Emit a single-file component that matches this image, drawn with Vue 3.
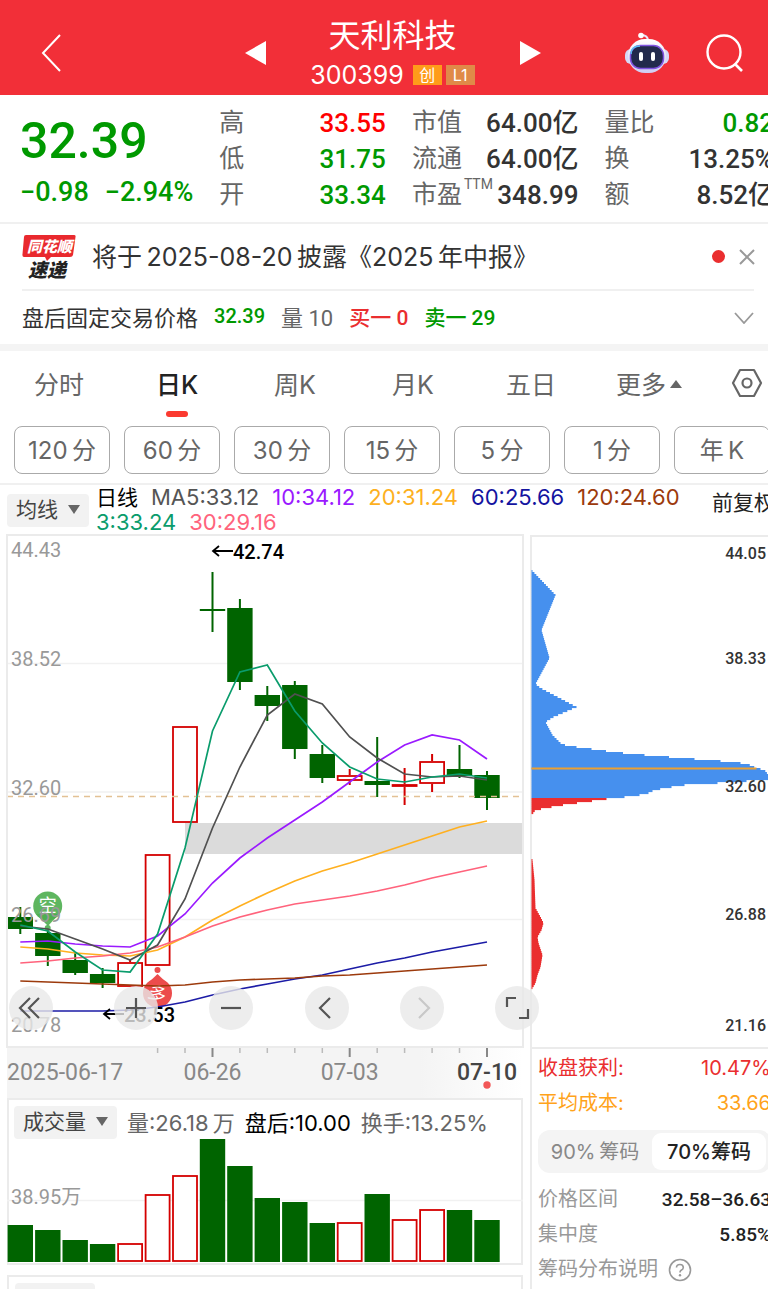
<template>
    <div class="stock-page">
        <header class="top-bar">
            <button class="icon-btn back" aria-label="返回">
                <svg width="20" height="38" viewBox="0 0 20 38"><path d="M19 1 L2 19 L19 37" fill="none" stroke="#fff" stroke-width="2" /></svg>
            </button>
            <div class="switcher">
                <button class="icon-btn" aria-label="上一只">
                    <svg width="21" height="24" viewBox="0 0 21 24"><path d="M0 12 L21 0 V24 Z" fill="#fff" /></svg>
                </button>
                <div class="stock-title">
                    <h1>天利科技</h1>
                    <div class="code-row">
                        <span class="code">300399</span>
                        <span class="tag">创</span>
                        <span class="tag level">L1</span>
                    </div>
                </div>
                <button class="icon-btn" aria-label="下一只">
                    <svg width="21" height="24" viewBox="0 0 21 24"><path d="M21 12 L0 0 V24 Z" fill="#fff" /></svg>
                </button>
            </div>
            <div class="top-actions">
                <button class="icon-btn" aria-label="智能助手">
                    <svg width="46" height="42" viewBox="0 0 46 42">
                        <defs>
                            <linearGradient id="shell" x1="0" y1="0" x2="0" y2="1">
                                <stop offset="0" stop-color="#fff" />
                                <stop offset="1" stop-color="#cfcdf2" />
                            </linearGradient>
                        </defs>
                        <path d="M17 3 Q24 3 24 9" fill="none" stroke="#e9e6fa" stroke-width="2" />
                        <circle cx="17" cy="3.5" r="2.8" fill="#fff" />
                        <rect x="1" y="17" width="44" height="15" rx="6" fill="#d5d8f6" />
                        <rect x="4" y="7" width="38" height="34" rx="17" fill="url(#shell)" />
                        <rect x="6.5" y="13.5" width="33" height="23" rx="10" fill="#222a4c" stroke="#8053e0" stroke-width="1.5" />
                        <path d="M7 22 Q7 14 16 14" fill="none" stroke="#59bff0" stroke-width="1.5" />
                        <rect x="15" y="20" width="4" height="9" rx="2" fill="#fff" />
                        <rect x="27" y="20" width="4" height="9" rx="2" fill="#fff" />
                    </svg>
                </button>
                <button class="icon-btn" aria-label="搜索">
                    <svg width="38" height="38" viewBox="0 0 38 38">
                        <circle cx="18" cy="18" r="16.5" fill="none" stroke="#fff" stroke-width="2.4" />
                        <path d="M29 30 L36 37" stroke="#fff" stroke-width="2.6" />
                    </svg>
                </button>
            </div>
        </header>

        <section class="quote">
            <div class="quote-price">
                <div class="price">32.39</div>
                <div class="change"><span>−0.98</span><span>−2.94%</span></div>
            </div>
            <dl v-for="(group, g) in quoteGroups" :key="g" class="quote-group">
                <div v-for="item in group" :key="item.label">
                    <dt>{{ item.label }}<sup v-if="item.sup">{{ item.sup }}</sup></dt>
                    <dd :class="item.tone">{{ item.value }}</dd>
                </div>
            </dl>
        </section>

        <section class="notices">
            <div class="news">
                <svg class="news-logo" width="54" height="48" viewBox="0 0 54 48">
                    <path d="M4 2 H52 Q54 2 53.5 4 L51 22 Q50.5 24 48 24 H29 L25 28 L23 24 H2 Q0 24 0.5 21 L2 4 Q2 2 4 2 Z" fill="#e9292e" />
                    <text x="5" y="19" font-size="15" fill="#fff">同花顺</text>
                    <text x="6" y="44" font-size="19" fill="#222">速递</text>
                </svg>
                <a class="news-text" href="#">将于&thinsp;2025-08-20&thinsp;披露《2025&thinsp;年中报》</a>
                <span class="dot"></span>
                <button class="icon-btn" aria-label="关闭">
                    <svg width="16" height="16" viewBox="0 0 16 16"><path d="M1 1 L15 15 M15 1 L1 15" stroke="#999" stroke-width="2" /></svg>
                </button>
            </div>
            <div class="after-hours">
                <span>盘后固定交易价格</span>
                <b class="green num">32.39</b>
                <span class="grey">量 10</span>
                <b class="red">买一 0</b>
                <b class="green">卖一 29</b>
                <button class="icon-btn" aria-label="展开">
                    <svg width="20" height="12" viewBox="0 0 20 12"><path d="M1 1 L10 11 L19 1" fill="none" stroke="#999" stroke-width="1.8" /></svg>
                </button>
            </div>
        </section>

        <nav class="periods">
            <button v-for="p in periods" :key="p" class="period" :class="{ active: p === period }" @click="period = p">
                {{ p }}<i v-if="p === '更多'" class="tri-up"></i>
            </button>
            <button class="icon-btn settings" aria-label="设置">
                <svg width="32" height="30" viewBox="0 0 32 30">
                    <path d="M9 2 H23 L30 15 L23 28 H9 L2 15 Z" fill="none" stroke="#666" stroke-width="2.2" stroke-linejoin="round" />
                    <circle cx="16" cy="15" r="4.5" fill="none" stroke="#666" stroke-width="2.2" />
                </svg>
            </button>
        </nav>
        <div class="minutes">
            <button v-for="m in minutes" :key="m">{{ m }}</button>
        </div>

        <section class="ma-bar">
            <div class="picker">
                <select aria-label="主图指标"><option>均线</option></select>
                <i class="tri-down"></i>
            </div>
            <div class="ma-values">
                <span class="black label">日线</span>
                <span v-for="ma in maValues" :key="ma.text" :style="{ color: ma.color }">{{ ma.text }}</span>
            </div>
            <button class="adjust">前复权</button>
        </section>

        <main class="charts">
            <div class="left">
                <div class="kline">
                    <svg viewBox="0 0 516 512" class="chart-svg">
                        <rect x="178" y="288" width="338" height="31" fill="#dbdbdb" />
                        <path d="M0 128.5 H516 M0 257 H516 M0 384.5 H516" stroke="#f1f1f1" stroke-width="1.6" />
                        <g v-for="(c, i) in candles" :key="i">
                            <path :d="`M${cx(i)} ${c[3]} V${c[1]} M${cx(i)} ${c[2]} V${c[4]}`" :stroke="c[0] ? '#d40000' : '#006400'" stroke-width="2" />
                            <rect v-if="c[0]" :x="cx(i) - 12" :y="c[1] + 1" width="24" :height="Math.max(c[2] - c[1] - 2, 1)" fill="#fff" stroke="#d40000" stroke-width="1.8" />
                            <rect v-else :x="cx(i) - 12.7" :y="c[1]" width="25.4" :height="c[2] - c[1]" fill="#006400" />
                        </g>
                        <path d="M0 261.5 H516" stroke="#e3c195" stroke-width="1.5" stroke-dasharray="6 5" />
                        <g fill="#4cae4f" fill-opacity="0.9">
                            <path d="M29 379 L41 391 L52 379 Z" />
                            <circle cx="40.7" cy="371" r="14.5" />
                            <circle cx="40.7" cy="393" r="3" />
                        </g>
                        <text x="40.7" y="377" class="marker">空</text>
                        <g fill="#ec4c4c">
                            <path d="M139 450 L150.5 439 L162 450 Z" />
                            <circle cx="150.5" cy="458" r="14.5" />
                            <circle cx="150.5" cy="435" r="3" />
                        </g>
                        <text x="150.5" y="465" class="marker" transform="rotate(20 150.5 458)">多</text>
                        <polyline v-for="line in lines" :key="line.color" :points="toPoints(line.ys)" :stroke="line.color" fill="none" stroke-width="1.7" />
                        <text v-for="t in priceTicks" :key="t.y" x="4" :y="t.y" class="tick">{{ t.text }}</text>
                        <text x="226" y="24" class="extreme">42.74</text>
                        <path d="M226 16 H206 M212 11 L206 16 L212 21" fill="none" stroke="#000" stroke-width="1.8" />
                        <text x="117" y="487" class="extreme">23.53</text>
                        <path d="M117 479 H97 M103 474 L97 479 L103 484" fill="none" stroke="#000" stroke-width="1.8" />
                    </svg>
                    <div class="controls">
                        <button v-for="c in controls" :key="c.name" :aria-label="c.name">
                            <svg viewBox="0 0 44 44"><path :d="c.d" fill="none" :stroke="c.off ? '#c8c8c8' : '#555'" stroke-width="2.2" /></svg>
                        </button>
                    </div>
                </div>
                <svg viewBox="0 0 516 51" class="chart-svg axis">
                    <path v-for="i in axisTicks" :key="i" :d="`M${cx(i)} 1 V${i % 5 === 2 ? 10 : 6}`" :stroke="i % 5 === 2 ? '#888' : '#bbb'" :stroke-width="i % 5 === 2 ? 2 : 1.5" />
                    <text x="0" y="33">2025-06-17</text>
                    <text :x="cx(7)" y="33" text-anchor="middle">06-26</text>
                    <text :x="cx(12)" y="33" text-anchor="middle">07-03</text>
                    <text :x="cx(17)" y="33" text-anchor="middle" class="now">07-10</text>
                    <circle :cx="cx(17)" cy="38" r="3.7" fill="#f25757" />
                </svg>
                <div class="volume">
                    <div class="volume-head">
                        <div class="picker">
                            <select aria-label="副图指标"><option>成交量</option></select>
                            <i class="tri-down"></i>
                        </div>
                        <span>量:26.18&thinsp;万</span>
                        <span class="black">盘后:10.00</span>
                        <span>换手:13.25%</span>
                    </div>
                    <svg viewBox="0 0 516 124" class="chart-svg">
                        <path d="M0 61.5 H516" stroke="#f1f1f1" stroke-width="1.6" />
                        <template v-for="(v, i) in volumes" :key="i">
                            <rect v-if="candles[i][0]" :x="cx(i) - 12" :y="124 - v" width="24" :height="v - 2" fill="#fff" stroke="#d40000" stroke-width="1.8" />
                            <rect v-else :x="cx(i) - 12.7" :y="123 - v" width="25.4" :height="v" fill="#006400" />
                        </template>
                        <text x="4" y="65" class="tick">38.95万</text>
                    </svg>
                </div>
                <div class="next-panel"><span></span></div>
            </div>

            <aside class="right">
                <svg viewBox="0 0 238 512" class="chart-svg">
                    <rect v-for="b in chips" :key="b.y" x="1.5" :y="b.y" :width="b.w" height="2.1" :fill="b.y < 263 ? '#4690ee' : '#ea2e2f'" />
                    <rect x="1.5" y="232.5" width="225" height="2" fill="#eba032" />
                    <text v-for="t in chipTicks" :key="t.y" x="236" :y="t.y" class="chip-tick">{{ t.text }}</text>
                </svg>
                <div class="chip-info">
                    <div class="row red"><span>收盘获利:</span><span>10.47%</span></div>
                    <div class="row orange"><span>平均成本:</span><span>33.66</span></div>
                    <div class="segment">
                        <button v-for="s in segments" :key="s" :class="{ active: s === segment }" @click="segment = s">{{ s }}</button>
                    </div>
                    <div class="row"><span>价格区间</span><b>32.58–36.63</b></div>
                    <div class="row"><span>集中度</span><b>5.85%</b></div>
                    <a class="help" href="#">筹码分布说明
                        <svg width="24" height="24" viewBox="0 0 24 24">
                            <circle cx="12" cy="12" r="10.5" fill="none" stroke="#999" stroke-width="1.6" />
                            <path d="M8.5 9.5 Q8.5 6.5 12 6.5 Q15.3 6.5 15.3 9.5 Q15.3 11.2 13.2 12.3 Q12 13 12 14.5" fill="none" stroke="#999" stroke-width="1.6" />
                            <circle cx="12" cy="17.3" r="1.2" fill="#999" />
                        </svg>
                    </a>
                </div>
            </aside>
        </main>
    </div>
</template>

<script setup>
import { ref, computed } from 'vue';

const quoteGroups = [
    [
        { label: '高', value: '33.55', tone: 'bright-red' },
        { label: '低', value: '31.75', tone: 'green' },
        { label: '开', value: '33.34', tone: 'green' },
    ],
    [
        { label: '市值', value: '64.00亿' },
        { label: '流通', value: '64.00亿' },
        { label: '市盈', sup: 'TTM', value: '348.99' },
    ],
    [
        { label: '量比', value: '0.82', tone: 'green' },
        { label: '换', value: '13.25%' },
        { label: '额', value: '8.52亿' },
    ],
];

const periods = ['分时', '日K', '周K', '月K', '五日', '更多'];
const period = ref('日K');
const minutes = ['120\u2009分', '60\u2009分', '30\u2009分', '15\u2009分', '5\u2009分', '1\u2009分', '年\u2009K'];
const segments = ['90%\u2009筹码', '70%筹码'];
const segment = ref('70%筹码');

const maValues = [
    { text: 'MA5:33.12', color: '#555' },
    { text: '10:34.12', color: '#9a1aff' },
    { text: '20:31.24', color: '#fdb01e' },
    { text: '60:25.66', color: '#1414a0' },
    { text: '120:24.60', color: '#9c3a0c' },
    { text: '3:33.24', color: '#0a9c6c' },
    { text: '30:29.16', color: '#ff637c' },
];

// [up, body top, body bottom, high, low]
const candles = [
    [0, 382, 394, 372, 399],
    [0, 398, 421, 393, 431],
    [0, 425, 438, 418, 440],
    [0, 439, 448, 433, 453],
    [1, 427, 452, 425, 452],
    [1, 319, 431, 319, 431],
    [1, 191, 288, 191, 288],
    [0, 74, 76, 37, 97],
    [0, 73, 147, 64, 155],
    [0, 160, 171, 151, 186],
    [0, 150, 214, 146, 224],
    [0, 219, 243, 210, 248],
    [1, 240, 246, 234, 250],
    [0, 246, 250, 202, 262],
    [1, 249, 252, 233, 270],
    [1, 226, 249, 219, 257],
    [0, 234, 241, 210, 243],
    [0, 240, 263, 236, 275],
];

const lines = [
    { color: '#1c1ca6', ys: [476, 476, 476, 476, 475, 472, 467, 460, 454, 449, 444, 440, 434, 428, 423, 417, 412, 407] },
    { color: '#9c3a0c', ys: [446, 447, 448, 449, 450, 451, 450, 447, 445, 444, 443, 441, 440, 438, 436, 434, 432, 430] },
    { color: '#ffb020', ys: [412, 414, 418, 420, 421, 415, 402, 385, 371, 358, 346, 336, 328, 319, 310, 301, 292, 286] },
    { color: '#ff637c', ys: [428, 426, 423, 421, 418, 412, 402, 391, 382, 375, 369, 365, 361, 356, 350, 343, 337, 331] },
    { color: '#9a1aff', ys: [407, 406, 409, 411, 412, 401, 379, 348, 323, 303, 285, 267, 247, 227, 210, 200, 205, 224] },
    { color: '#505050', ys: [391, 394, 404, 414, 425, 410, 364, 293, 232, 180, 159, 169, 202, 223, 239, 242, 241, 245] },
    { color: '#0a9c6c', ys: [390, 396, 417, 435, 437, 399, 313, 196, 137, 130, 176, 208, 232, 244, 247, 242, 239, 243] },
];

const priceTicks = [
    { text: '44.43', y: 22 },
    { text: '38.52', y: 131 },
    { text: '32.60', y: 260 },
    { text: '26.69', y: 387 },
    { text: '20.78', y: 497 },
];

const chipTicks = [
    { text: '44.05', y: 24 },
    { text: '38.33', y: 129 },
    { text: '32.60', y: 257 },
    { text: '26.88', y: 385 },
    { text: '21.16', y: 496 },
];

const axisTicks = [5, 6, 7, 8, 9, 10, 11, 12, 13, 14, 15, 16, 17];
const volumes = [37, 32, 22, 18, 19, 68, 87, 123, 96, 64, 60, 39, 40, 68, 43, 53, 52, 42];

const controls = [
    { name: '最早', d: 'M30 12 L20 22 L30 32 M21 12 L11 22 L21 32' },
    { name: '放大', d: 'M22 12 V32 M12 22 H32' },
    { name: '缩小', d: 'M12 22 H32' },
    { name: '左移', d: 'M25 12 L15 22 L25 32' },
    { name: '右移', d: 'M19 12 L29 22 L19 32', off: true },
    { name: '全屏', d: 'M12 21 V12 H21 M33 23 V32 H24' },
];

const cx = (i) => Math.round((13.3 + i * 27.45) * 10) / 10;
const toPoints = (ys) => ys.map((y, i) => `${cx(i)},${y}`).join(' ');

// cost distribution outline as [y, width] knots
const upper = [
    [36, 1], [60, 24], [95, 10], [123, 18], [149, 4], [153, 9], [172, 45], [182, 22], [187, 14], [200, 21],
    [203, 24], [209, 30], [211, 37], [213, 53], [215, 67], [217, 82], [219, 101], [221, 125], [223, 150], [225, 176],
    [227, 202], [229, 216], [233, 225], [235, 233], [240, 237], [244, 237], [246, 215], [248, 186], [250, 153],
    [252, 140], [255, 123], [258, 117], [260, 108], [262, 93], [263, 82], [265, 68], [267, 53], [269, 38], [271, 25], [273, 15],
    [275, 4], [279, 1],
];
const lower = [
    [325, 1], [345, 3], [373, 4], [382, 9], [388, 12], [395, 10], [402, 6], [408, 7], [420, 11], [432, 9], [440, 6], [448, 4], [453, 1],
];

const sample = (knots) => {
    const out = [];
    for (let y = knots[0][0]; y <= knots[knots.length - 1][0]; y += 2) {
        const k = Math.max(1, knots.findIndex((p) => p[0] >= y));
        const [y0, w0] = knots[k - 1];
        const [y1, w1] = knots[k];
        out.push({ y: y - 1, w: w0 + ((w1 - w0) * (y - y0)) / (y1 - y0) });
    }
    return out;
};
const chips = computed(() => [...sample(upper), ...sample(lower)]);
</script>

<style>
body {
    margin: 0;
    background: #fff;
}
</style>

<style scoped>
.stock-page {
    height: 100vh;
    overflow: hidden;
    background: #fff;
    color: #333;
    font-family: Inter, "Noto Sans CJK SC", sans-serif;
    font-size: 20px;
}

.stock-page * {
    box-sizing: border-box;
}

button,
select {
    font: inherit;
    color: inherit;
    background: none;
    border: none;
    padding: 0;
    margin: 0;
}

a {
    color: inherit;
    text-decoration: none;
}

svg {
    display: block;
}

.green {
    color: #009900;
}

.red {
    color: #ea2e2f;
}

.bright-red {
    color: #ff0000;
}

.orange {
    color: #ffa31a;
}

.black {
    color: #000;
}

.grey {
    color: #666;
}

/* Header */
.top-bar {
    display: grid;
    grid-template-columns: 1fr 296px 1fr;
    align-items: center;
    height: 95px;
    padding: 10px 24px 0 41px;
    background: #f22f38;
    color: #fff;
}

.back {
    justify-self: start;
}

.switcher,
.top-actions,
.code-row {
    display: flex;
    align-items: center;
}

.switcher {
    justify-content: space-between;
}

.stock-title {
    text-align: center;
}

.stock-title h1 {
    margin: 0;
    font-size: 32px;
    line-height: 44px;
    font-weight: 400;
}

.code-row {
    gap: 4px;
    line-height: 34px;
}

.code {
    font-size: 25px;
    margin-right: 5px;
}

.tag {
    width: 29px;
    font-size: 16px;
    line-height: 20px;
    background: #ff9c1a;
}

.tag.level {
    background: #e08a48;
}

.top-actions {
    justify-self: end;
    gap: 36px;
}

/* Quote */
.quote {
    display: grid;
    grid-template-columns: 172fr 167fr 167fr 170fr;
    column-gap: 26px;
    margin-right: -6px;
    padding: 10px 0 9px 20px;
    border-bottom: 2px solid #f0f0f0;
    font-family: Roboto, "Noto Sans CJK SC", sans-serif;
    font-weight: 500;
}

.price {
    margin-top: 8px;
    font-size: 50px;
    line-height: 56px;
    color: #009900;
}

.change {
    display: flex;
    gap: 16px;
    margin-top: 5px;
    font-size: 27px;
    line-height: 36px;
    color: #009900;
    white-space: nowrap;
}

.quote-group {
    margin: 0;
}

.quote-group div {
    display: flex;
    justify-content: space-between;
    height: 36px;
    line-height: 36px;
    white-space: nowrap;
}

.quote-group dt {
    font-size: 25px;
    font-weight: 400;
    color: #666;
}

.quote-group sup {
    display: inline-block;
    font-size: 14px;
    line-height: 14px;
    vertical-align: top;
    margin-left: 2px;
}

.quote-group dd {
    margin: 0;
    font-size: 26px;
}

/* Notices */
.notices {
    border-bottom: 7px solid #f4f4f4;
}

.news,
.after-hours {
    display: flex;
    align-items: center;
}

.news {
    height: 65px;
    margin-left: 22px;
    padding-right: 13px;
}

.news-logo {
    font-family: "Noto Sans CJK SC", sans-serif;
    font-weight: 900;
    font-style: italic;
}

.news-text {
    flex: 1;
    margin-left: 16px;
    padding-bottom: 4px;
    font-size: 25px;
    white-space: nowrap;
}

.dot {
    width: 13px;
    height: 13px;
    margin-right: 14px;
    border-radius: 50%;
    background: #ea2e2f;
}

.after-hours {
    gap: 16px;
    height: 55px;
    margin: 0 14px 0 22px;
    border-top: 2px solid #f0f0f0;
    font-size: 22px;
}

.after-hours span,
.after-hours b {
    padding-bottom: 4px;
}

.after-hours b {
    font-size: 21px;
    font-weight: 500;
}

.after-hours .grey,
.after-hours b {
    font-family: Roboto, "Noto Sans CJK SC", sans-serif;
}

.after-hours .num {
    font-size: 20px;
}

.after-hours .icon-btn {
    margin-left: auto;
}

/* Period tabs */
.periods {
    display: grid;
    grid-template-columns: repeat(6, 118fr) 60fr;
    align-items: center;
    height: 68px;
    font-size: 25px;
    color: #666;
}

.period {
    position: relative;
    height: 68px;
    padding-bottom: 4px;
}

.period.active {
    font-weight: 500;
    color: #222;
}

.period.active::after {
    content: "";
    position: absolute;
    left: 50%;
    bottom: 2px;
    width: 22px;
    height: 6px;
    margin-left: -11px;
    border-radius: 3px;
    background: #fb3a30;
}

.settings {
    justify-self: end;
    margin-right: 5px;
    padding-bottom: 4px;
}

.tri-up,
.tri-down {
    display: inline-block;
    border-left: 6px solid transparent;
    border-right: 6px solid transparent;
}

.tri-up {
    margin-left: 4px;
    border-bottom: 8px solid #666;
    vertical-align: 6px;
}

.tri-down {
    border-top: 9px solid #666;
}

.minutes {
    display: grid;
    grid-template-columns: repeat(7, 1fr);
    gap: 14px;
    margin-right: -2px;
    padding: 7px 0 9px 14px;
    border-bottom: 2px solid #f0f0f0;
}

.minutes button {
    height: 48px;
    padding-bottom: 4px;
    border: 1px solid #aaa;
    border-radius: 8px;
    font-size: 24px;
    color: #666;
    white-space: nowrap;
}

/* Moving averages */
.ma-bar {
    display: flex;
    align-items: center;
    gap: 7px;
    height: 50px;
    padding-left: 7px;
    overflow: hidden;
}

.picker {
    position: relative;
    flex: none;
    display: flex;
    align-items: center;
    gap: 10px;
    height: 33px;
    padding: 0 9px 2px 9px;
    border-radius: 4px;
    background: #f2f2f2;
    font-size: 21px;
    color: #444;
}

.picker select {
    appearance: none;
}

.ma-values {
    flex: none;
    width: 600px;
    display: flex;
    flex-wrap: wrap;
    column-gap: 13px;
    font-size: 22px;
    line-height: 25px;
}

.ma-values .label {
    font-size: 21px;
}

.adjust {
    flex: none;
    margin-left: 9px;
    padding-bottom: 18px;
    font-size: 21px;
    color: #222;
}

/* Charts */
.charts {
    display: grid;
    grid-template-columns: 516fr 238fr;
    column-gap: 7px;
    padding-left: 7px;
}

.chart-svg {
    width: 100%;
    overflow: visible;
}

.kline {
    position: relative;
    outline: 2px solid #ebebeb;
    outline-offset: -1px;
}

.tick,
.extreme,
.chip-tick,
.axis text {
    font-family: Roboto, "Noto Sans CJK SC", sans-serif;
}

.tick {
    font-size: 20px;
    fill: #999;
}

.extreme {
    font-size: 20px;
    font-weight: 500;
    fill: #000;
}

.marker {
    font-size: 18px;
    text-anchor: middle;
    fill: #fff;
}

.controls {
    position: absolute;
    left: 2px;
    right: -16px;
    bottom: 17px;
    display: flex;
    justify-content: space-between;
}

.controls button {
    width: 44px;
    height: 44px;
    border-radius: 50%;
    background: rgba(232, 232, 232, 0.8);
}

.controls button:first-child {
    margin-right: 10px;
}

.axis {
    background: linear-gradient(90deg, #f4f4f4 80%, #fff);
}

.axis text {
    font-size: 23px;
    fill: #888;
}

.axis .now {
    font-weight: 500;
    fill: #444;
}

.volume {
    border: 2px solid #ebebeb;
}

.volume-head {
    display: flex;
    align-items: center;
    gap: 10px;
    height: 39px;
    padding: 5px 0 0 5px;
    font-size: 22px;
    color: #666;
    white-space: nowrap;
}

.volume-head > span {
    padding-bottom: 2px;
}

.volume .chart-svg {
    margin-left: -2px;
    width: calc(100% + 4px);
}

.next-panel {
    height: 48px;
    margin-top: 10px;
    padding: 6px;
    border: 2px solid #ebebeb;
}

.next-panel span {
    display: block;
    width: 80px;
    height: 32px;
    border-radius: 4px;
    background: #f2f2f2;
}

.right {
    min-width: 0;
    border-left: 2px solid #ebebeb;
    border-top: 2px solid #ebebeb;
}

.right .chart-svg {
    margin: -2px 0 0 -2px;
    width: calc(100% + 2px);
}

.chip-tick {
    font-size: 16px;
    font-weight: 500;
    text-anchor: end;
    fill: #333;
}

.chip-info {
    margin-right: -3px;
    padding-left: 6px;
    border-top: 2px solid #ebebeb;
    color: #999;
}

.row {
    display: flex;
    justify-content: space-between;
    line-height: 35px;
    white-space: nowrap;
}

.row.red {
    color: #ea2e2f;
    padding-top: 2px;
}

.row.orange {
    color: #ffa31a;
}

.row b {
    font-family: Roboto, sans-serif;
    font-size: 19px;
    font-weight: 500;
    color: #222;
}

.segment {
    display: flex;
    margin: 9px 0;
    padding: 3px 5px 3px 0;
    height: 43px;
    border-radius: 12px;
    background: #f4f4f4;
    color: #888;
}

.segment button {
    flex: 1;
    padding-bottom: 3px;
    border-radius: 9px;
    white-space: nowrap;
}

.segment .active {
    background: #fff;
    color: #222;
    font-weight: 500;
}

.help {
    display: flex;
    align-items: center;
    gap: 10px;
    line-height: 35px;
    white-space: nowrap;
}
</style>
